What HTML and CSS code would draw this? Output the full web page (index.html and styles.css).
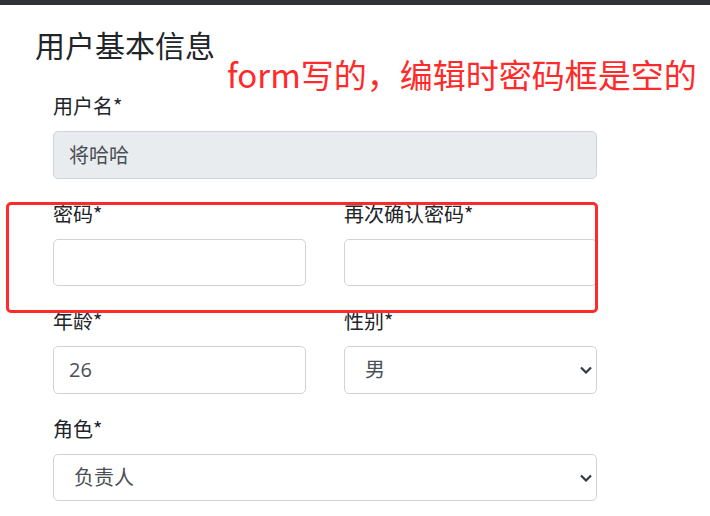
FILE: index.html
```html
<!DOCTYPE html>
<html>

<head>
	<meta charset="utf-8" />
	<title>用户基本信息</title>
	<meta name="viewport" content="width=device-width, initial-scale=1" />
	<link rel="stylesheet" href="styles.css">
</head>

<body>
	<div class="topbar"></div>
	<main class="page">
		<h3 class="title">用户基本信息</h3>
		<form class="user-form">
			<div class="group">
				<label>用户名*</label>
				<input class="field" type="text" value="将哈哈" disabled>
			</div>
			<div class="row">
				<div class="group">
					<label>密码*</label>
					<input class="field" type="password">
				</div>
				<div class="group">
					<label>再次确认密码*</label>
					<input class="field" type="password">
				</div>
			</div>
			<div class="row">
				<div class="group">
					<label>年龄*</label>
					<input class="field" type="text" value="26">
				</div>
				<div class="group">
					<label>性别*</label>
					<div class="select-wrap">
						<select class="field select">
							<option>男</option>
							<option>女</option>
						</select>
						<svg class="chevron" width="12" height="8" viewBox="0 0 12 8"><path d="M1 1.5l5 5 5-5" fill="none" stroke="#343a40" stroke-width="2.2"/></svg>
					</div>
				</div>
			</div>
			<div class="group">
				<label>角色*</label>
				<div class="select-wrap">
					<select class="field select">
						<option>负责人</option>
						<option>成员</option>
					</select>
					<svg class="chevron" width="12" height="8" viewBox="0 0 12 8"><path d="M1 1.5l5 5 5-5" fill="none" stroke="#343a40" stroke-width="2.2"/></svg>
				</div>
			</div>
		</form>

		<!-- annotation over the screenshot -->
		<div class="note">form写的，编辑时密码框是空的</div>
		<div class="note-box"></div>
	</main>
</body>

</html>
```

FILE: styles.css
```css
body {
	margin: 0;
	background: #fff;
	color: #212529;
	font-family: "Open Sans", "Noto Sans CJK SC", sans-serif;
}

.topbar {
	height: 5px;
	background-color: #2f3236;
}

.page {
	position: relative;
	padding: 21px 35px 0 35px;
}

.title {
	margin: 0 0 29px 0;
	font-size: 30px;
	font-weight: 400;
	line-height: 1.2;
	font-family: "Noto Sans CJK SC", sans-serif;
}

.user-form {
	width: 544px;
	padding-left: 18px;
}

.row {
	display: grid;
	grid-template-columns: 1fr 1fr;
	column-gap: 38px;
}

.group {
	margin-bottom: 20px;
}

.group label {
	display: block;
	margin-bottom: 10px;
	font-size: 20px;
	line-height: 30px;
	font-family: "Noto Sans CJK SC", sans-serif;
}

.field {
	display: block;
	box-sizing: border-box;
	width: 100%;
	height: 47.5px;
	padding: 0 15px;
	border: 1px solid #ced4da;
	border-radius: 5px;
	background-color: #fff;
	color: #495057;
	font-size: 20px;
	font-family: "Open Sans", "Noto Sans CJK SC", sans-serif;
	outline: none;
}

.field:disabled {
	background-color: #e9ecef;
}

.select-wrap {
	position: relative;
}

.select {
	appearance: none;
	-webkit-appearance: none;
	padding-left: 20px;
}

.chevron {
	position: absolute;
	right: 5px;
	top: 20px;
	pointer-events: none;
}

.note {
	position: absolute;
	left: 227px;
	top: 50px;
	color: #ff2a2a;
	font-size: 33px;
	line-height: 1.2;
	white-space: nowrap;
	font-family: "Noto Sans CJK SC", sans-serif;
}

.note-box {
	position: absolute;
	left: 6px;
	top: 197px;
	width: 586px;
	height: 105px;
	border: 3px solid #ff2b2b;
	border-radius: 5px;
}
```
